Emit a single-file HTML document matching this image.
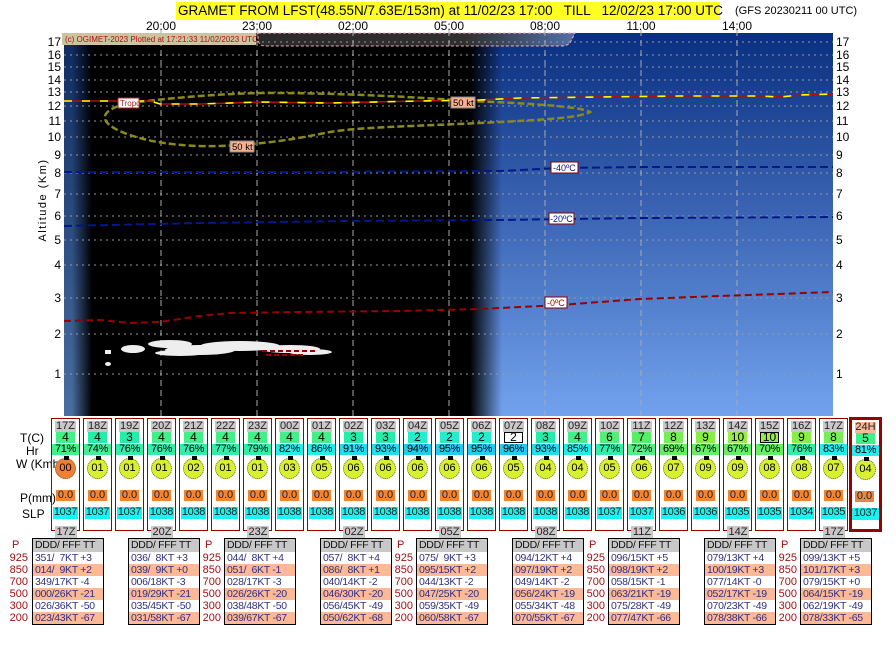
<!DOCTYPE html>
<html><head><meta charset="utf-8"><style>
*{margin:0;padding:0;box-sizing:border-box}
body{width:896px;height:652px;background:#fff;position:relative;overflow:hidden;font-family:"Liberation Sans",sans-serif;color:#000}
.a{position:absolute}
.c{position:absolute;top:418px;width:29px;height:113px;border:1px solid #900;font-size:11px;text-align:center;line-height:11px}
.c>*{position:absolute;display:block;font-style:normal;font-weight:normal;text-decoration:none}
.h{top:2px;left:3px;width:21px;height:11px;background:#c8c8c8;color:#222}
.t{top:13px;left:4px;width:19px;height:11px;font-size:12px}
.r{top:25px;left:0;width:27px;height:11px;font-size:11px;letter-spacing:-0.3px}
.w{top:39px;left:3px;width:21px;height:21px;border-radius:50%;background:#d8f030;border:1px dotted #666;line-height:19px;font-size:11px}
.w::before{content:"";position:absolute;left:8px;top:-3px;width:5px;height:4px;background:#000}
.p{top:71px;left:4px;width:19px;height:11px;background:#f48434;color:#222}
.s{top:88px;left:1px;width:25px;height:12px;background:#16f4f4;color:#222;letter-spacing:-0.3px}
.tb{position:absolute;top:538px;width:72px;border:1px solid #000;font-size:10.5px;letter-spacing:-0.3px;line-height:12px;color:#303080;white-space:pre;overflow:hidden}
.tb div{height:12px;padding-left:2px}
.tb div:first-child{background:#c8c8c8;color:#111;height:13px;line-height:13px}
.tb div:nth-child(3),.tb div:nth-child(5),.tb div:nth-child(7){background:#fdb896}
.tab{position:absolute;top:526px;width:22px;height:12px;background:#c8c8c8;font-size:11px;line-height:13px;text-align:center;color:#222}
.pl{position:absolute;top:539px;width:28px;font-size:11px;line-height:12px;color:#a01010;text-align:right}
.lb{position:absolute;font-size:11px;color:#000}
</style></head><body>

<div class="a" style="left:176px;top:2px;width:544px;height:18px;background:#ffff22;font-size:13.5px;line-height:18px;white-space:pre;padding-left:2px">GRAMET FROM LFST(48.55N/7.63E/153m) at 11/02/23 17:00   TILL   12/02/23 17:00 UTC</div>
<div class="a" style="left:735px;top:5px;font-size:11px;white-space:pre">(GFS 20230211 00 UTC)</div>

<svg class="a" style="left:0;top:0" width="896" height="420" font-family="Liberation Sans, sans-serif">
<defs>
<linearGradient id="bl" x1="0" y1="0" x2="0" y2="1"><stop offset="0" stop-color="#0a2f80"/><stop offset="1" stop-color="#72a2ee"/></linearGradient>
<linearGradient id="ls" x1="0" y1="0" x2="0" y2="1"><stop offset="0" stop-color="#0e2a60"/><stop offset="1" stop-color="#4a6ea2"/></linearGradient>
<linearGradient id="fr" x1="0" y1="0" x2="1" y2="0"><stop offset="0" stop-color="#000" stop-opacity="1"/><stop offset="1" stop-color="#000" stop-opacity="0"/></linearGradient>
<linearGradient id="fl" x1="0" y1="0" x2="1" y2="0"><stop offset="0" stop-color="#000" stop-opacity="0"/><stop offset="1" stop-color="#000" stop-opacity="1"/></linearGradient>
<linearGradient id="tg" x1="0" y1="0" x2="1" y2="0"><stop offset="0" stop-color="#2a2a2a"/><stop offset="0.65" stop-color="#303030"/><stop offset="1" stop-color="#5070a8"/></linearGradient>
</defs>
<rect x="64" y="33" width="769" height="383" fill="#000"/>
<rect x="64" y="33" width="28" height="383" fill="url(#ls)"/>
<rect x="72" y="33" width="20" height="383" fill="url(#fl)"/>
<rect x="470" y="33" width="363" height="383" fill="url(#bl)"/>
<rect x="470" y="33" width="32" height="383" fill="url(#fr)"/>
<path d="M258 33 H575 L570 43 Q567 46 560 46 H265 Q259 46 258 40Z" fill="url(#tg)" stroke="#f0b0c0" stroke-dasharray="3,2"/>
<g stroke="#999" stroke-dasharray="2,4" stroke-width="1">
<path d="M64 42H833M64 55H833M64 67H833M64 80H833M64 92H833M64 106H833M64 121H833M64 137H833M64 155H833M64 173H833M64 194H833M64 216H833M64 240H833M64 265H833M64 298H833M64 334H833M64 374H833"/>
</g>
<g stroke="#aaa" stroke-dasharray="6,4" stroke-width="1">
<path d="M161 30V416M257 30V416M353 30V416M449 30V416M545 30V416M641 30V416M737 30V416"/>
</g>
<rect x="62" y="33" width="194" height="12" fill="#cac4a0"/>
<text x="65" y="42" font-size="8" fill="#b01010">(c) OGIMET-2023 Plotted at 17:21:33 11/02/2023 UTC</text>
<path d="M138 102 C180 97 230 93 270 93 C330 93 400 96 470 101 C520 103 580 106 590 112 C580 118 540 120 480 123 C420 126 360 127 330 132 C300 138 270 144 220 146 C180 147 150 142 130 135 C100 125 95 112 125 104Z" fill="none" stroke="#8a8a1c" stroke-width="2.5" stroke-dasharray="7,3"/>
<path d="M64 101H150L160 104H200L260 102L330 103L420 101L480 100L520 98L600 97L680 96L760 96L780 97L800 95L833 94" fill="none" stroke="#b01010" stroke-width="1.6"/>
<path d="M64 101H150L160 104H200L260 102L330 103L420 101L480 100L520 98L600 97L680 96L760 96L780 97L800 95L833 94" fill="none" stroke="#ff0" stroke-width="1.6" stroke-dasharray="8,10"/>
<rect x="118" y="98" width="21" height="10" fill="#fff" stroke="#b02020"/><text x="120" y="106" font-size="8" fill="#b02020">Tropo</text>
<rect x="451" y="97" width="24" height="11" fill="#f8b090" stroke="#888"/><text x="453" y="106" font-size="9.5">50 kt</text>
<rect x="230" y="141" width="24" height="11" fill="#f8b090" stroke="#888"/><text x="232" y="150" font-size="9.5">50 kt</text>
<path d="M64 172H300L500 171L560 168L640 167H833" fill="none" stroke="#00188a" stroke-width="2" stroke-dasharray="8,4"/>
<rect x="551" y="162" width="27" height="11" fill="#fff" stroke="#800"/><text x="553" y="171" font-size="9" fill="#001888">-40ºC</text>
<path d="M64 226L200 223L350 221L500 220L640 218L833 217" fill="none" stroke="#00188a" stroke-width="2" stroke-dasharray="8,4"/>
<rect x="549" y="213" width="25" height="11" fill="#fff" stroke="#800"/><text x="550" y="222" font-size="9" fill="#001888">-20ºC</text>
<path d="M64 321L100 320L130 323L160 322L200 316L230 313L300 312L400 311L480 309L560 305L640 299L720 296L833 292" fill="none" stroke="#900" stroke-width="2" stroke-dasharray="7,4"/>
<rect x="545" y="297" width="22" height="11" fill="#fff" stroke="#800"/><text x="547" y="306" font-size="9" fill="#900">-0ºC</text>
<g fill="#eee">
<ellipse cx="133" cy="349" rx="12" ry="4"/><ellipse cx="170" cy="344" rx="22" ry="4"/><ellipse cx="200" cy="350" rx="35" ry="5"/>
<ellipse cx="240" cy="346" rx="40" ry="5"/><ellipse cx="290" cy="349" rx="30" ry="4"/><ellipse cx="310" cy="352" rx="22" ry="3"/>
<ellipse cx="180" cy="353" rx="25" ry="3"/><rect x="105" y="350" width="6" height="4"/><ellipse cx="108" cy="364" rx="3" ry="2"/>
</g>
<path d="M262 351H316M266 355H305" stroke="#900" stroke-width="2" stroke-dasharray="5,3"/>
<g font-size="12" fill="#000">
<text x="161" y="30" text-anchor="middle">20:00</text><text x="257" y="30" text-anchor="middle">23:00</text><text x="353" y="30" text-anchor="middle">02:00</text><text x="449" y="30" text-anchor="middle">05:00</text><text x="545" y="30" text-anchor="middle">08:00</text><text x="641" y="30" text-anchor="middle">11:00</text><text x="737" y="30" text-anchor="middle">14:00</text>
</g>
<g font-size="12" text-anchor="end">
<text x="61" y="46">17</text><text x="61" y="59">16</text><text x="61" y="71">15</text><text x="61" y="84">14</text><text x="61" y="96">13</text><text x="61" y="110">12</text><text x="61" y="125">11</text><text x="61" y="141">10</text><text x="61" y="159">9</text><text x="61" y="177">8</text><text x="61" y="198">7</text><text x="61" y="220">6</text><text x="61" y="244">5</text><text x="61" y="269">4</text><text x="61" y="302">3</text><text x="61" y="338">2</text><text x="61" y="378">1</text>
</g>
<g font-size="12">
<text x="836" y="46">17</text><text x="836" y="59">16</text><text x="836" y="71">15</text><text x="836" y="84">14</text><text x="836" y="96">13</text><text x="836" y="110">12</text><text x="836" y="125">11</text><text x="836" y="141">10</text><text x="836" y="159">9</text><text x="836" y="177">8</text><text x="836" y="198">7</text><text x="836" y="220">6</text><text x="836" y="244">5</text><text x="836" y="269">4</text><text x="836" y="302">3</text><text x="836" y="338">2</text><text x="836" y="378">1</text>
</g>
<text x="46" y="200" font-size="11" text-anchor="middle" transform="rotate(-90 46 200)" letter-spacing="1.5">Altitude (Km)</text>
</svg>

<div class="lb" style="left:20px;top:431px;font-size:12px">T(C)</div>
<div class="lb" style="left:26px;top:444px;font-size:12px">Hr</div>
<div class="lb" style="left:16px;top:457px;font-size:12px">W (Kmh)</div>
<div class="lb" style="left:20px;top:491px;font-size:12px">P(mm)</div>
<div class="lb" style="left:22px;top:507px;font-size:12px">SLP</div>

<div class="c" style="left:51px"><b class="h">17Z</b><i class="t" style="background:#44ee88">4</i><i class="r" style="background:#44ee88">71%</i><u class="w" style="background:#f08030">00</u><span class="p">0.0</span><em class="s">1037</em></div>
<div class="c" style="left:83px"><b class="h">18Z</b><i class="t" style="background:#22eeaa">4</i><i class="r" style="background:#44ee99">74%</i><u class="w">01</u><span class="p">0.0</span><em class="s">1037</em></div>
<div class="c" style="left:115px"><b class="h">19Z</b><i class="t" style="background:#22eeaa">3</i><i class="r" style="background:#33eeaa">76%</i><u class="w">01</u><span class="p">0.0</span><em class="s">1037</em></div>
<div class="c" style="left:147px"><b class="h">20Z</b><i class="t" style="background:#44ee88">4</i><i class="r" style="background:#33eeaa">76%</i><u class="w">01</u><span class="p">0.0</span><em class="s">1038</em></div>
<div class="c" style="left:179px"><b class="h">21Z</b><i class="t" style="background:#44ee88">4</i><i class="r" style="background:#33eeaa">76%</i><u class="w">02</u><span class="p">0.0</span><em class="s">1038</em></div>
<div class="c" style="left:211px"><b class="h">22Z</b><i class="t" style="background:#44ee88">4</i><i class="r" style="background:#33eeaa">77%</i><u class="w">01</u><span class="p">0.0</span><em class="s">1038</em></div>
<div class="c" style="left:243px"><b class="h">23Z</b><i class="t" style="background:#44ee88">4</i><i class="r" style="background:#33eeaa">79%</i><u class="w">01</u><span class="p">0.0</span><em class="s">1038</em></div>
<div class="c" style="left:275px"><b class="h">00Z</b><i class="t" style="background:#44ee88">4</i><i class="r" style="background:#22eeee">82%</i><u class="w">03</u><span class="p">0.0</span><em class="s">1038</em></div>
<div class="c" style="left:307px"><b class="h">01Z</b><i class="t" style="background:#44ee88">4</i><i class="r" style="background:#22eeee">86%</i><u class="w">05</u><span class="p">0.0</span><em class="s">1038</em></div>
<div class="c" style="left:339px"><b class="h">02Z</b><i class="t" style="background:#22eeaa">3</i><i class="r" style="background:#22ddee">91%</i><u class="w">06</u><span class="p">0.0</span><em class="s">1038</em></div>
<div class="c" style="left:371px"><b class="h">03Z</b><i class="t" style="background:#22eeaa">3</i><i class="r" style="background:#22ddee">93%</i><u class="w">06</u><span class="p">0.0</span><em class="s">1038</em></div>
<div class="c" style="left:403px"><b class="h">04Z</b><i class="t" style="background:#22eecc">2</i><i class="r" style="background:#22ccee">94%</i><u class="w">06</u><span class="p">0.0</span><em class="s">1038</em></div>
<div class="c" style="left:435px"><b class="h">05Z</b><i class="t" style="background:#22eecc">2</i><i class="r" style="background:#22ccee">95%</i><u class="w">06</u><span class="p">0.0</span><em class="s">1038</em></div>
<div class="c" style="left:467px"><b class="h">06Z</b><i class="t" style="background:#22eecc">2</i><i class="r" style="background:#22ccee">95%</i><u class="w">06</u><span class="p">0.0</span><em class="s">1038</em></div>
<div class="c" style="left:499px"><b class="h">07Z</b><i class="t" style="background:#fff;border:1px solid #000;line-height:9px">2</i><i class="r" style="background:#22ccee">96%</i><u class="w">05</u><span class="p">0.0</span><em class="s">1038</em></div>
<div class="c" style="left:531px"><b class="h">08Z</b><i class="t" style="background:#22eeaa">3</i><i class="r" style="background:#22ddee">93%</i><u class="w">04</u><span class="p">0.0</span><em class="s">1038</em></div>
<div class="c" style="left:563px"><b class="h">09Z</b><i class="t" style="background:#44ee88">4</i><i class="r" style="background:#22eeee">85%</i><u class="w">04</u><span class="p">0.0</span><em class="s">1038</em></div>
<div class="c" style="left:595px"><b class="h">10Z</b><i class="t" style="background:#55ee77">6</i><i class="r" style="background:#33eeaa">77%</i><u class="w">05</u><span class="p">0.0</span><em class="s">1037</em></div>
<div class="c" style="left:627px"><b class="h">11Z</b><i class="t" style="background:#55ee66">7</i><i class="r" style="background:#55ee88">72%</i><u class="w">06</u><span class="p">0.0</span><em class="s">1037</em></div>
<div class="c" style="left:659px"><b class="h">12Z</b><i class="t" style="background:#77ee55">8</i><i class="r" style="background:#66ee66">69%</i><u class="w">07</u><span class="p">0.0</span><em class="s">1036</em></div>
<div class="c" style="left:691px"><b class="h">13Z</b><i class="t" style="background:#88ee44">9</i><i class="r" style="background:#66ee66">67%</i><u class="w">09</u><span class="p">0.0</span><em class="s">1036</em></div>
<div class="c" style="left:723px"><b class="h">14Z</b><i class="t" style="background:#99ee44">10</i><i class="r" style="background:#66ee66">67%</i><u class="w">09</u><span class="p">0.0</span><em class="s">1035</em></div>
<div class="c" style="left:755px"><b class="h">15Z</b><i class="t" style="background:#99ee44;border:1px solid #000;line-height:9px">10</i><i class="r" style="background:#66ee66">70%</i><u class="w">08</u><span class="p">0.0</span><em class="s">1035</em></div>
<div class="c" style="left:787px"><b class="h">16Z</b><i class="t" style="background:#88ee44">9</i><i class="r" style="background:#33eeaa">76%</i><u class="w">08</u><span class="p">0.0</span><em class="s">1034</em></div>
<div class="c" style="left:819px"><b class="h">17Z</b><i class="t" style="background:#77ee55">8</i><i class="r" style="background:#22eeee">83%</i><u class="w">07</u><span class="p">0.0</span><em class="s">1035</em></div>
<div class="c" style="left:849px;top:417px;width:33px;height:115px;border:3px solid #900"><b class="h" style="background:#fdb896;left:3px">24H</b><i class="t" style="background:#44ee88;left:4px">5</i><i class="r" style="background:#22eeee;left:0">81%</i><u class="w" style="left:3px">04</u><span class="p" style="left:3px">0.0</span><em class="s" style="left:0;width:27px">1037</em></div>

<div class="tab" style="left:55px">17Z</div><div class="tab" style="left:151px">20Z</div><div class="tab" style="left:247px">23Z</div><div class="tab" style="left:343px">02Z</div><div class="tab" style="left:439px">05Z</div><div class="tab" style="left:535px">08Z</div><div class="tab" style="left:631px">11Z</div><div class="tab" style="left:727px">14Z</div><div class="tab" style="left:823px">17Z</div>

<div class="pl" style="left:0"><div style="text-align:left;padding-left:12px;height:13px">P</div>925<br>850<br>700<br>500<br>300<br>200</div>
<div class="pl" style="left:193px"><div style="text-align:left;padding-left:12px;height:13px">P</div>925<br>850<br>700<br>500<br>300<br>200</div>
<div class="pl" style="left:385px"><div style="text-align:left;padding-left:12px;height:13px">P</div>925<br>850<br>700<br>500<br>300<br>200</div>
<div class="pl" style="left:577px"><div style="text-align:left;padding-left:12px;height:13px">P</div>925<br>850<br>700<br>500<br>300<br>200</div>
<div class="pl" style="left:769px"><div style="text-align:left;padding-left:12px;height:13px">P</div>925<br>850<br>700<br>500<br>300<br>200</div>

<div class="tb" style="left:32px"><div>DDD/ FFF TT</div><div>351/  7KT +3</div><div>014/  9KT +2</div><div>349/17KT -4</div><div>000/26KT -21</div><div>026/36KT -50</div><div>023/43KT -67</div></div>
<div class="tb" style="left:128px"><div>DDD/ FFF TT</div><div>036/  8KT +3</div><div>039/  9KT +0</div><div>006/18KT -3</div><div>019/29KT -21</div><div>035/45KT -50</div><div>031/58KT -67</div></div>
<div class="tb" style="left:224px"><div>DDD/ FFF TT</div><div>044/  8KT +4</div><div>051/  6KT -1</div><div>028/17KT -3</div><div>026/26KT -20</div><div>038/48KT -50</div><div>039/67KT -67</div></div>
<div class="tb" style="left:320px"><div>DDD/ FFF TT</div><div>057/  8KT +4</div><div>086/  8KT +1</div><div>040/14KT -2</div><div>046/30KT -20</div><div>056/45KT -49</div><div>050/62KT -68</div></div>
<div class="tb" style="left:416px"><div>DDD/ FFF TT</div><div>075/  9KT +3</div><div>095/15KT +2</div><div>044/13KT -2</div><div>047/25KT -20</div><div>059/35KT -49</div><div>060/58KT -67</div></div>
<div class="tb" style="left:512px"><div>DDD/ FFF TT</div><div>094/12KT +4</div><div>097/19KT +2</div><div>049/14KT -2</div><div>056/24KT -19</div><div>055/34KT -48</div><div>070/55KT -67</div></div>
<div class="tb" style="left:608px"><div>DDD/ FFF TT</div><div>096/15KT +5</div><div>098/19KT +2</div><div>058/15KT -1</div><div>063/21KT -19</div><div>075/28KT -49</div><div>077/47KT -66</div></div>
<div class="tb" style="left:704px"><div>DDD/ FFF TT</div><div>079/13KT +4</div><div>100/19KT +3</div><div>077/14KT -0</div><div>052/17KT -19</div><div>070/23KT -49</div><div>078/38KT -66</div></div>
<div class="tb" style="left:800px"><div>DDD/ FFF TT</div><div>099/13KT +5</div><div>101/17KT +3</div><div>079/15KT +0</div><div>064/15KT -19</div><div>062/19KT -49</div><div>078/33KT -65</div></div>
</body></html>
